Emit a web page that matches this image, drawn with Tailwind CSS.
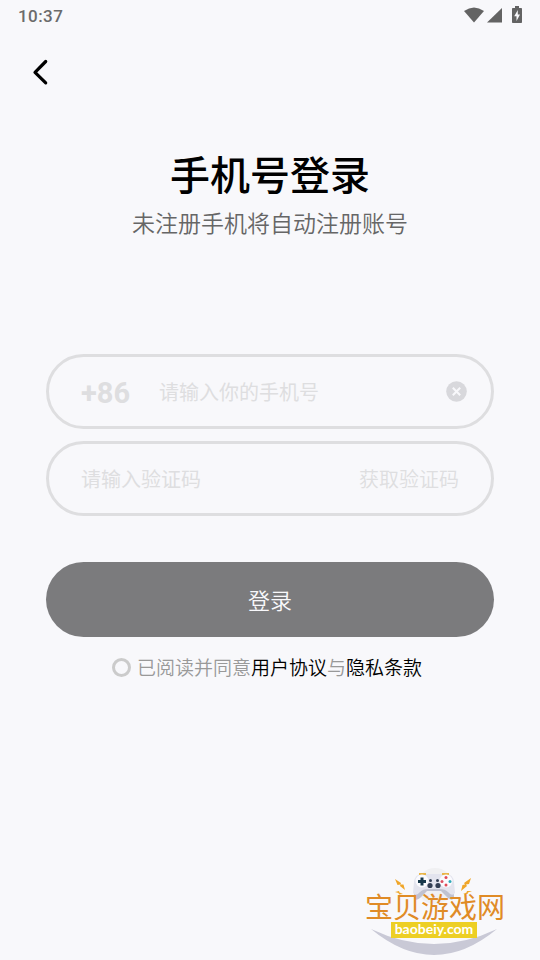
<!DOCTYPE html>
<html lang="zh-CN">
<head>
<meta charset="utf-8">
<meta name="viewport" content="width=device-width, initial-scale=1">
<title>手机号登录</title>
<script src="https://cdn.jsdelivr.net/npm/@tailwindcss/browser@4"></script>
</head>
<body class="flex min-h-screen flex-col bg-[#f8f8fb] font-['Noto_Sans_CJK_SC',sans-serif] text-black">
  <div class="flex h-8 items-center justify-between px-[18px] text-[#6b6b6b]">
    <time class="font-[Roboto,sans-serif] text-[17px] font-medium leading-8 tracking-wide">10:37</time>
    <div class="flex items-center">
      <svg class="h-5 w-[22px]" viewBox="0 0 22 20" fill="#636363" aria-hidden="true"><path d="M0 5Q10-2 20 5L10 16.500Z"/></svg>
      <svg class="ml-[1px] h-5 w-[15px]" viewBox="0 0 15 20" fill="#636363" aria-hidden="true"><path d="M15 2V16.500H0Z"/></svg>
      <svg class="ml-[10px] h-5 w-[10px]" viewBox="0 0 10 20" aria-hidden="true"><path fill="#636363" d="M3 0h4v2h2.200q.8 0 .8.8v13.400q0 .8-.8.8H.8q-.8 0-.8-.8V2.800Q0 2 .8 2H3Z"/><path fill="#f8f8fb" d="M5.800 4 2.200 10.200H4.500V15L8 8.500H5.800Z"/></svg>
    </div>
  </div>

  <header class="flex h-20 items-center px-5">
    <button type="button" aria-label="返回" class="flex size-10 items-center justify-center">
      <svg class="size-8" viewBox="0 0 32 32" fill="none" stroke="#000" stroke-width="3.200" stroke-linecap="round" stroke-linejoin="round" aria-hidden="true"><path d="M21.700 5.500 11 16.300 21.700 26.800"/></svg>
    </button>
  </header>

  <main class="flex flex-1 flex-col px-[46px] pt-[37px]">
    <h1 class="text-center text-[40px] font-medium leading-12">手机号登录</h1>
    <p class="mt-[9px] text-center text-[23px] font-[350] leading-8 text-[#666]">未注册手机将自动注册账号</p>

    <form class="mt-[116px]">
      <div class="flex h-[75px] items-center rounded-full border-3 border-[#dedee0] pl-8 pr-6">
        <label for="phone" class="w-[78px] pt-0.5 font-[Roboto,sans-serif] text-[29px] font-bold leading-8 text-[#dedee0]">+86</label>
        <input id="phone" type="tel" placeholder="请输入你的手机号" class="min-w-0 flex-1 text-xl outline-none placeholder:text-[#dedee0]">
        <button type="button" aria-label="清除" class="size-[21px]">
          <svg viewBox="0 0 21 21" aria-hidden="true"><circle cx="10.500" cy="10.500" r="10.300" fill="#d8d8dc"/><path d="m6.800 6.800 7.400 7.400m0-7.400-7.400 7.400" stroke="#f8f8fb" stroke-width="2"/></svg>
        </button>
      </div>
      <div class="mt-3 flex h-[75px] items-center rounded-full border-3 border-[#dedee0] pl-8 pr-8">
        <input id="code" type="text" inputmode="numeric" aria-label="验证码" placeholder="请输入验证码" class="min-w-0 flex-1 text-xl outline-none placeholder:text-[#dedee0]">
        <button type="button" class="text-xl font-[350] text-[#dedee0]">获取验证码</button>
      </div>
      <button type="submit" class="mt-[46px] h-[75px] w-full rounded-full bg-[#7b7b7d] text-[22px] font-[350] text-[#f8f8fb]">登录</button>
      <div class="mt-4 flex items-center justify-center pr-1.5 text-[19px] font-[350] leading-7">
        <input id="agree" type="checkbox" class="mr-1.5 size-[19px] appearance-none rounded-full border-3 border-[#cbcbcb] checked:bg-[#7b7b7d]">
        <label for="agree" class="text-[#999]">已阅读并同意</label><a href="#terms">用户协议</a><span class="text-[#999]">与</span><a href="#privacy">隐私条款</a>
      </div>
    </form>
  </main>

  <footer class="flex justify-end pr-[30px]">
    <svg class="h-[96px] w-[150px]" viewBox="0 0 150 96" role="img" aria-label="宝贝游戏网 baobeiy.com">
      <circle cx="75" cy="22" r="18" fill="#f0f0f2"/>
      <path d="M11 65Q74 117 137 65Q74 95 11 65Z" fill="#c9c9d6"/>
      <path d="M56 14Q54 24 54 33Q55 38 60 34L67 27H81L88 34Q93 38 94 33Q94 24 92 14Z" fill="#c0c2d0"/>
      <path d="M62 10H86Q93 10 94 18L95 29Q92 33 88 28Q85 25 80 25H68Q63 25 60 28Q56 33 53 29L54 18Q55 10 62 10Z" fill="#e3e4ee"/>
      <path d="M59 10h7M82 10h7" stroke="#e9b549" stroke-width="2"/>
      <circle cx="62" cy="17" r="6.500" fill="#fafafe"/><circle cx="86" cy="17" r="6.500" fill="#fafafe"/>
      <path d="M58 17.500h8M62 13.500v8" stroke="#17384b" stroke-width="3"/>
      <circle cx="86" cy="13.500" r="1.500" fill="#e14a58"/><circle cx="86" cy="21" r="1.500" fill="#e14a58"/><circle cx="82" cy="17.500" r="1.500" fill="#dc5062"/><circle cx="90" cy="17.500" r="1.500" fill="#2fa9b8"/>
      <g fill="#344055"><circle cx="70.500" cy="16.500" r="1.500"/><circle cx="77.500" cy="16.500" r="1.500"/><circle cx="70" cy="21.500" r="2.600"/><circle cx="78" cy="21.500" r="2.600"/></g>
      <g fill="#f0a629"><path d="m35 15 6 4-.5 1.500 3 0L45 26l-5-4 .5-1.500-3 .5Z"/><path d="m35 28 4-1 .5 1.500L43 30l-4 .5-.5-1.500Z"/><path d="m111 14-7 5 1 1.500-2.500.5-1.500 6 6-5-1-1.500 3-.5Z"/><path d="m112 27-5 0-.5 1.500L103 30l4.500 0 .5-1.500Z"/></g>
      <text x="5" y="54" font-family="Noto Sans CJK SC, sans-serif" font-size="28" fill="#e08b26">宝贝游戏网</text>
      <rect x="31" y="58" width="86" height="16" fill="#edcf24"/>
      <text x="74" y="70" text-anchor="middle" font-family="Lato, sans-serif" font-size="14" font-weight="700" fill="#fff">baobeiy.com</text>
    </svg>
  </footer>
</body>
</html>
